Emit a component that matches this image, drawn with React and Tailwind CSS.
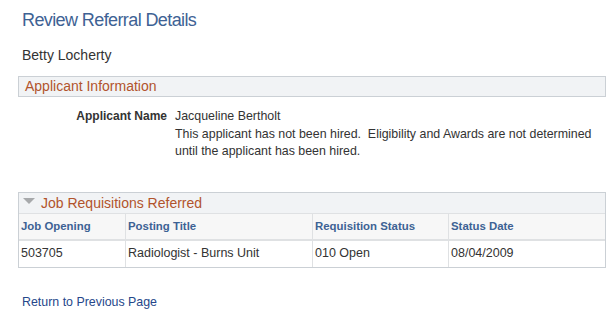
const COLS = [
  { label: 'Job Opening', w: 'w-[106px]' },
  { label: 'Posting Title', w: 'w-[187px]' },
  { label: 'Requisition Status', w: 'w-[136px]' },
  { label: 'Status Date', w: 'flex-1' },
]

const ROWS = [['503705', 'Radiologist - Burns Unit', '010 Open', '08/04/2009']]

export default function App() {
  return (
    <div className="h-[317px] w-[615px] overflow-hidden bg-white font-['Liberation_Sans',Arial,sans-serif] text-[#333333]">
      <h1 className="ml-[22px] pt-[9px] text-[18px] font-normal leading-[22px] tracking-[-0.6px] text-[#3e6294]">Review Referral Details</h1>

      <div className="ml-[22px] mt-[16px] text-[14px] leading-[16px] text-[#333333]">Betty Locherty</div>

      <div className="ml-[18px] mt-[13px] h-[21px] w-[588px] border border-[#cbd0d5] bg-[#f1f3f5] pl-[6px] text-[14px] leading-[19px] text-[#b2542c]">
        Applicant Information
      </div>

      <div className="mt-[11px] flex text-[12.4px]">
        <div className="w-[167px] text-right text-[12px] font-bold leading-[16px] text-[#333333]">Applicant Name</div>
        <div className="ml-[8px] w-[425px]">
          <div className="leading-[16px]">Jacqueline Bertholt</div>
          <div className="mt-[2px] leading-[17px]">
            This applicant has not been hired.&nbsp; Eligibility and Awards are not determined until the applicant has been hired.
          </div>
        </div>
      </div>

      <div className="ml-[18px] mt-[32px] w-[588px] border border-[#cbd0d5]">
        <div className="flex h-[20px] items-center bg-[#f1f3f5] pl-[4px]">
          <svg width="12" height="8" viewBox="0 0 12 8" className="mt-[-3px]">
            <polygon points="0,0 12,0 6,6" fill="#a7a9ab" />
          </svg>
          <span className="ml-[6px] text-[14px] leading-[18px] text-[#b2542c]">Job Requisitions Referred</span>
        </div>
        <div className="flex h-[26px] border-t border-[#dfe1e3] bg-[#f7f7f7]">
          {COLS.map((c, i) => (
            <div
              key={c.label}
              className={`${c.w} flex items-center pl-[2px] text-[11.4px] font-bold text-[#3d6294] ${i > 0 ? 'border-l border-[#dfe1e3]' : ''}`}
            >
              {c.label}
            </div>
          ))}
        </div>
        {ROWS.map((r) => (
          <div key={r[0]} className="flex h-[28px] border-t-2 border-[#dfe1e3] bg-white">
            {r.map((v, i) => (
              <div
                key={i}
                className={`${COLS[i].w} flex items-center pb-[1px] pl-[2px] text-[12.5px] text-[#333333] ${i > 0 ? 'border-l border-[#dfe1e3]' : ''}`}
              >
                {v}
              </div>
            ))}
          </div>
        ))}
      </div>

      <a href="#" className="ml-[22px] mt-[27px] block text-[12.4px] leading-[14px] text-[#26478a]">
        Return to Previous Page
      </a>
    </div>
  )
}
